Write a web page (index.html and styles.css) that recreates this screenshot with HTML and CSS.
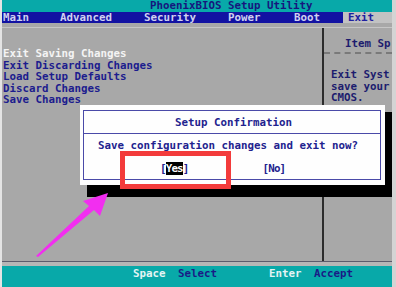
FILE: index.html
```html
<!DOCTYPE html>
<html>
<head>
<meta charset="utf-8">
<link rel="stylesheet" href="styles.css">
</head>
<body>
<div class="screen">
  <div class="titlebar"><span class="title">PhoenixBIOS Setup Utility</span></div>
  <div class="menubar">
    <span class="mi w-main">Main</span>
    <span class="mi w-adv">Advanced</span>
    <span class="mi w-sec">Security</span>
    <span class="mi w-pow">Power</span>
    <span class="mi w-boot">Boot</span>
    <span class="mi active">Exit</span>
  </div>
  <div class="body">
    <div class="leftcol">
      <div class="item sel">Exit Saving Changes</div>
      <div class="item">Exit Discarding Changes</div>
      <div class="item">Load Setup Defaults</div>
      <div class="item">Discard Changes</div>
      <div class="item">Save Changes</div>
    </div>
    <div class="rightcol">
      <div class="help-head">Item Sp</div>
      <div class="help-text">
        <div>Exit Syst</div>
        <div>save your</div>
        <div>CMOS.</div>
      </div>
    </div>
  </div>
  <div class="footer">
    <span class="key k1">Space</span><span class="act a1">Select</span>
    <span class="key k2">Enter</span><span class="act">Accept</span>
  </div>

  <div class="shadow"></div>
  <div class="dialog">
    <div class="dlg-inner">
      <div class="dlg-title">Setup Confirmation</div>
      <div class="dlg-msg">Save configuration changes and exit now?</div>
      <div class="dlg-btns">
        <span class="btn yes">[<span class="hl">Yes</span>]</span>
        <span class="btn no">[No]</span>
      </div>
    </div>
  </div>
  <div class="redbox"></div>
  <svg class="arrow" width="396" height="287" viewBox="0 0 396 287">
    <polygon points="36,256 89,206 83,201 108,193 100,216 94,210 38,257" fill="#f22ef0"/>
  </svg>
</div>
</body>
</html>
```

FILE: styles.css
```css
html, body {
  margin: 0;
  padding: 0;
}
body {
  width: 396px;
  height: 287px;
  overflow: hidden;
  font-family: "DejaVu Sans Mono", "Liberation Mono", monospace;
  font-weight: bold;
  font-size: 10.8px;
}
.screen {
  position: relative;
  width: 396px;
  height: 287px;
  box-sizing: border-box;
  border-left: 2px solid #e4e4e4;
  border-right: 4px solid #d4d4d4;
  background: #a8a8a8;
  display: flex;
  flex-direction: column;
}
.titlebar {
  height: 12px;
  background: #08a9a9;
  color: #16167e;
  line-height: 12px;
  padding-left: 148px;
  white-space: nowrap;
}
.menubar {
  height: 11px;
  background: #1212a2;
  color: #d0d0f0;
  display: flex;
  line-height: 11px;
  white-space: nowrap;
}
.mi { display: block; }
.w-main { width: 58px; padding-left: 1px; box-sizing: border-box; }
.w-adv { width: 84px; }
.w-sec { width: 84px; }
.w-pow { width: 66px; }
.w-boot { width: 49px; }
.mi.active {
  flex: 1;
  background: #c2c2c2;
  color: #2020a0;
  padding-left: 5px;
}
.body {
  flex: 1;
  display: flex;
  margin-top: 4px;
  border-top: 1px solid #c6c6c6;
  border-bottom: 1px solid #5c5c6c;
}
.leftcol {
  width: 322px;
  padding-top: 20px;
  padding-left: 1px;
  box-sizing: border-box;
  border-right: 2px solid #2c2c2c;
}
.item {
  height: 11.6px;
  line-height: 11.6px;
  color: #1c1c8e;
  white-space: nowrap;
}
.item.sel { color: #f4f4f4; }
.rightcol {
  flex: 1;
  display: flex;
  flex-direction: column;
}
.help-head {
  height: 26px;
  box-sizing: border-box;
  padding-top: 10px;
  padding-left: 21px;
  line-height: 11.6px;
  color: #1c1c6e;
  border-bottom: 2px dashed #7a7a7a;
  white-space: nowrap;
}
.help-text {
  padding-top: 15px;
  padding-left: 7px;
  line-height: 11.6px;
  color: #1c1c6e;
  white-space: nowrap;
}
.footer {
  height: 25px;
  box-sizing: border-box;
  border-top: 4px solid #b6b6b6;
  background: #08a9a9;
  display: flex;
  line-height: 12px;
  padding-top: 2px;
  padding-left: 131px;
  white-space: nowrap;
}
.key { color: #e4f4f4; }
.act { color: #1a1a86; }
.k1 { width: 45px; }
.a1 { width: 91px; }
.k2 { width: 45px; }

.shadow {
  position: absolute;
  left: 85px;
  top: 112px;
  width: 305px;
  height: 85px;
  background: #000;
}
.dialog {
  position: absolute;
  left: 78px;
  top: 105px;
  width: 305px;
  height: 80px;
  box-sizing: border-box;
  background: #fefefe;
  padding: 5px 4px 5px 3px;
}
.dlg-inner {
  height: 100%;
  box-sizing: border-box;
  border: 1px solid #4a4aa8;
  display: flex;
  flex-direction: column;
  color: #22228e;
}
.dlg-title {
  height: 22px;
  line-height: 24px;
  text-align: center;
  border-bottom: 1px solid #4a4aa8;
  padding-left: 3px;
}
.dlg-msg {
  height: 23px;
  line-height: 23px;
  padding-left: 14px;
  white-space: nowrap;
}
.dlg-btns {
  flex: 1;
  display: flex;
  align-items: center;
  padding-left: 76px;
  letter-spacing: -0.8px;
}
.btn.no { margin-left: 74px; }
.hl {
  background: #000;
  color: #fff;
}
.redbox {
  position: absolute;
  left: 118px;
  top: 151px;
  width: 111px;
  height: 38px;
  box-sizing: border-box;
  border: 5px solid #f33b3b;
}
.arrow {
  position: absolute;
  left: -2px;
  top: 0;
}
```
